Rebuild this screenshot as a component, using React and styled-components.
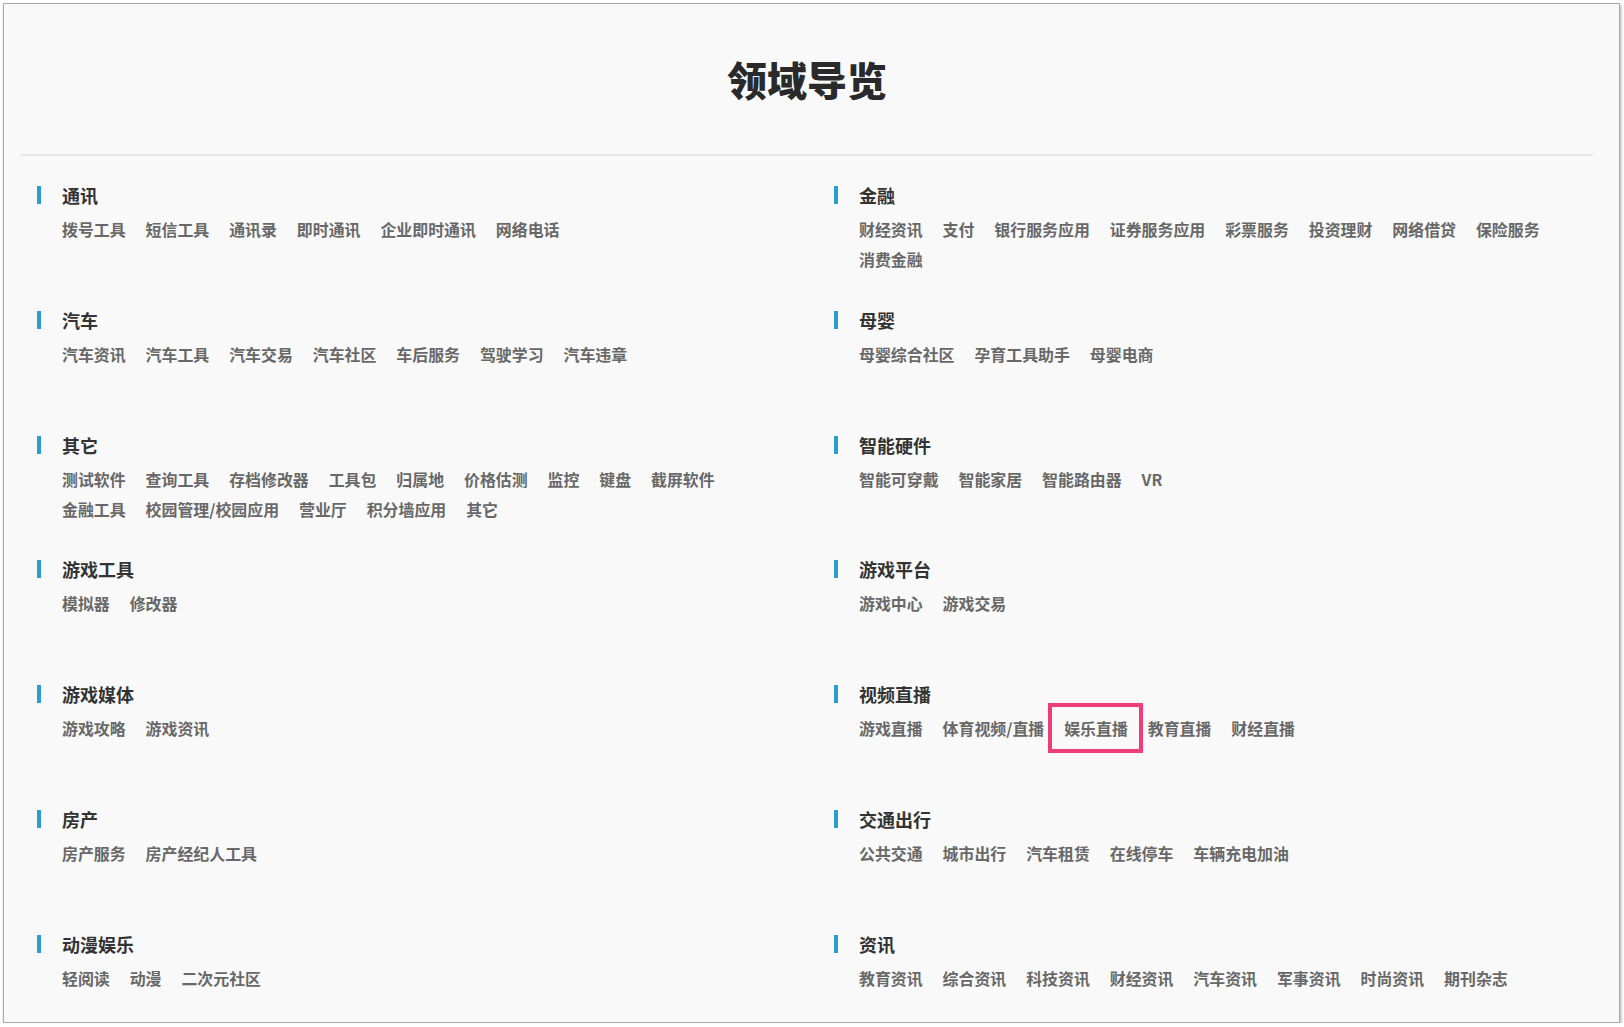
import React from "react";
import styled, { createGlobalStyle } from "styled-components";

const Global = createGlobalStyle`
  html, body { margin: 0; padding: 0; background: #ffffff; }
  body { font-family: "Noto Sans CJK SC", "Microsoft YaHei", sans-serif; }
`;

const Card = styled.div`
  box-sizing: border-box;
  margin: 3px 0 0 3px;
  width: 1617px;
  height: 1020px;
  border: 1px solid #a9a9a9;
  box-shadow: 1px 2px 3px rgba(0, 0, 0, 0.35);
  background: #f9f9fa;
  padding: 0 26px 0 17px;
  overflow: hidden;
`;

const Header = styled.header`
  height: 150px;
  display: flex;
  align-items: center;
  justify-content: center;
  border-bottom: 2px solid #e7e7e7;
`;

const Title = styled.h1`
  margin: 0;
  font-size: 40px;
  line-height: 1;
  font-weight: 900;
  color: #2a2a2a;
  letter-spacing: 0;
`;

const Grid = styled.div`
  display: grid;
  grid-template-columns: 797px 1fr;
  grid-template-rows: repeat(6, 124.8px) auto;
  padding: 24px 0 0 16px;
`;

const Section = styled.section`
  display: flex;
  flex-direction: column;
  gap: 5px;
`;

const SectionTitle = styled.h2`
  position: relative;
  margin: 0;
  padding-left: 25px;
  font-size: 18px;
  line-height: 30px;
  font-weight: 700;
  color: #333333;

  &::before {
    content: "";
    position: absolute;
    left: 0;
    top: 6px;
    width: 4px;
    height: 18px;
    background: #2a9dd2;
  }
`;

const Links = styled.div`
  display: flex;
  flex-wrap: wrap;
  column-gap: 19.9px;
  max-width: 700px;
  padding-left: 25px;
`;

const Link = styled.span`
  position: relative;
  display: inline-block;
  font-size: 15.93px;
  line-height: 30px;
  font-weight: 700;
  color: #686868;
  white-space: nowrap;

  ${(p) =>
    p.$marked &&
    `
    &::after {
      content: "";
      position: absolute;
      left: -16px;
      right: -15px;
      top: -11px;
      bottom: -9px;
      border: 4px solid #ee3e7a;
    }
  `}
`;

const left = [
  ["通讯", ["拨号工具", "短信工具", "通讯录", "即时通讯", "企业即时通讯", "网络电话"]],
  ["汽车", ["汽车资讯", "汽车工具", "汽车交易", "汽车社区", "车后服务", "驾驶学习", "汽车违章"]],
  ["其它", ["测试软件", "查询工具", "存档修改器", "工具包", "归属地", "价格估测", "监控", "键盘", "截屏软件", "金融工具", "校园管理/校园应用", "营业厅", "积分墙应用", "其它"]],
  ["游戏工具", ["模拟器", "修改器"]],
  ["游戏媒体", ["游戏攻略", "游戏资讯"]],
  ["房产", ["房产服务", "房产经纪人工具"]],
  ["动漫娱乐", ["轻阅读", "动漫", "二次元社区"]],
];

const right = [
  ["金融", ["财经资讯", "支付", "银行服务应用", "证券服务应用", "彩票服务", "投资理财", "网络借贷", "保险服务", "消费金融"]],
  ["母婴", ["母婴综合社区", "孕育工具助手", "母婴电商"]],
  ["智能硬件", ["智能可穿戴", "智能家居", "智能路由器", "VR"]],
  ["游戏平台", ["游戏中心", "游戏交易"]],
  ["视频直播", ["游戏直播", "体育视频/直播", "娱乐直播", "教育直播", "财经直播"]],
  ["交通出行", ["公共交通", "城市出行", "汽车租赁", "在线停车", "车辆充电加油"]],
  ["资讯", ["教育资讯", "综合资讯", "科技资讯", "财经资讯", "汽车资讯", "军事资讯", "时尚资讯", "期刊杂志"]],
];

const marked = "娱乐直播";

function Block({ title, items }) {
  return (
    <Section>
      <SectionTitle>{title}</SectionTitle>
      <Links>
        {items.map((it) => (
          <Link key={it} $marked={it === marked}>
            {it}
          </Link>
        ))}
      </Links>
    </Section>
  );
}

export default function App() {
  const rows = left.map((l, i) => [l, right[i]]);
  return (
    <>
      <Global />
      <Card>
        <Header>
          <Title>领域导览</Title>
        </Header>
        <Grid>
          {rows.map(([l, r]) => (
            <React.Fragment key={l[0]}>
              <Block title={l[0]} items={l[1]} />
              <Block title={r[0]} items={r[1]} />
            </React.Fragment>
          ))}
        </Grid>
      </Card>
    </>
  );
}
